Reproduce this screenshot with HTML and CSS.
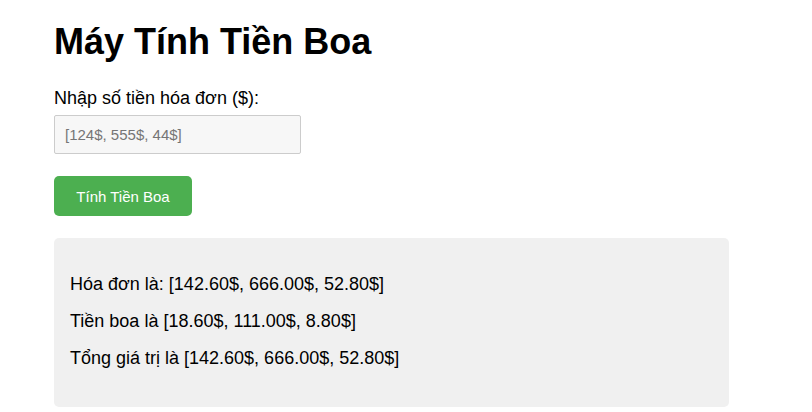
FILE: index.html
```html
<!DOCTYPE html>
<html lang="vi">
<head>
<meta charset="utf-8">
<title>Máy Tính Tiền Boa</title>
<link rel="stylesheet" href="styles.css">
</head>
<body>
<main class="app">
  <h1 class="title">Máy Tính Tiền Boa</h1>
  <label class="label" for="bills">Nhập số tiền hóa đơn ($):</label>
  <input class="input" id="bills" type="text" placeholder="[124$, 555$, 44$]">
  <button class="btn" type="button">Tính Tiền Boa</button>
  <section class="result">
    <p class="line">Hóa đơn là: [142.60$, 666.00$, 52.80$]</p>
    <p class="line">Tiền boa là [18.60$, 111.00$, 8.80$]</p>
    <p class="line">Tổng giá trị là [142.60$, 666.00$, 52.80$]</p>
  </section>
</main>
</body>
</html>
```
FILE: styles.css
```css
html, body {
  margin: 0;
  padding: 0;
  background: #fff;
}
body {
  font-family: "Liberation Sans", Arial, sans-serif;
  color: #000;
}
.app {
  width: 675px;
  margin-left: 54px;
  padding-top: 22px;
  display: flex;
  flex-direction: column;
  align-items: flex-start;
}
.title {
  margin: 0;
  font-size: 36px;
  font-weight: bold;
  line-height: 40px;
}
.label {
  margin-top: 26px;
  font-size: 18px;
  line-height: 20px;
}
.input {
  margin-top: 7px;
  box-sizing: border-box;
  width: 247px;
  height: 39px;
  padding: 0 10px;
  border: 1px solid #cccccc;
  border-radius: 2px;
  background: #f7f7f7;
  font-family: "Liberation Sans", Arial, sans-serif;
  font-size: 15px;
  color: #000;
}
.input::placeholder {
  color: #757575;
}
.btn {
  margin-top: 22px;
  box-sizing: border-box;
  width: 138px;
  height: 40px;
  padding: 0;
  border: none;
  border-radius: 5px;
  background: #4caf50;
  color: #fff;
  font-family: "Liberation Sans", Arial, sans-serif;
  font-size: 15px;
}
.result {
  margin-top: 22px;
  box-sizing: border-box;
  width: 675px;
  padding: 20px 16px 22px;
  background: #f0f0f0;
  border-radius: 5px;
}
.line {
  margin: 16px 0;
  font-size: 18px;
  line-height: 21px;
}
```
